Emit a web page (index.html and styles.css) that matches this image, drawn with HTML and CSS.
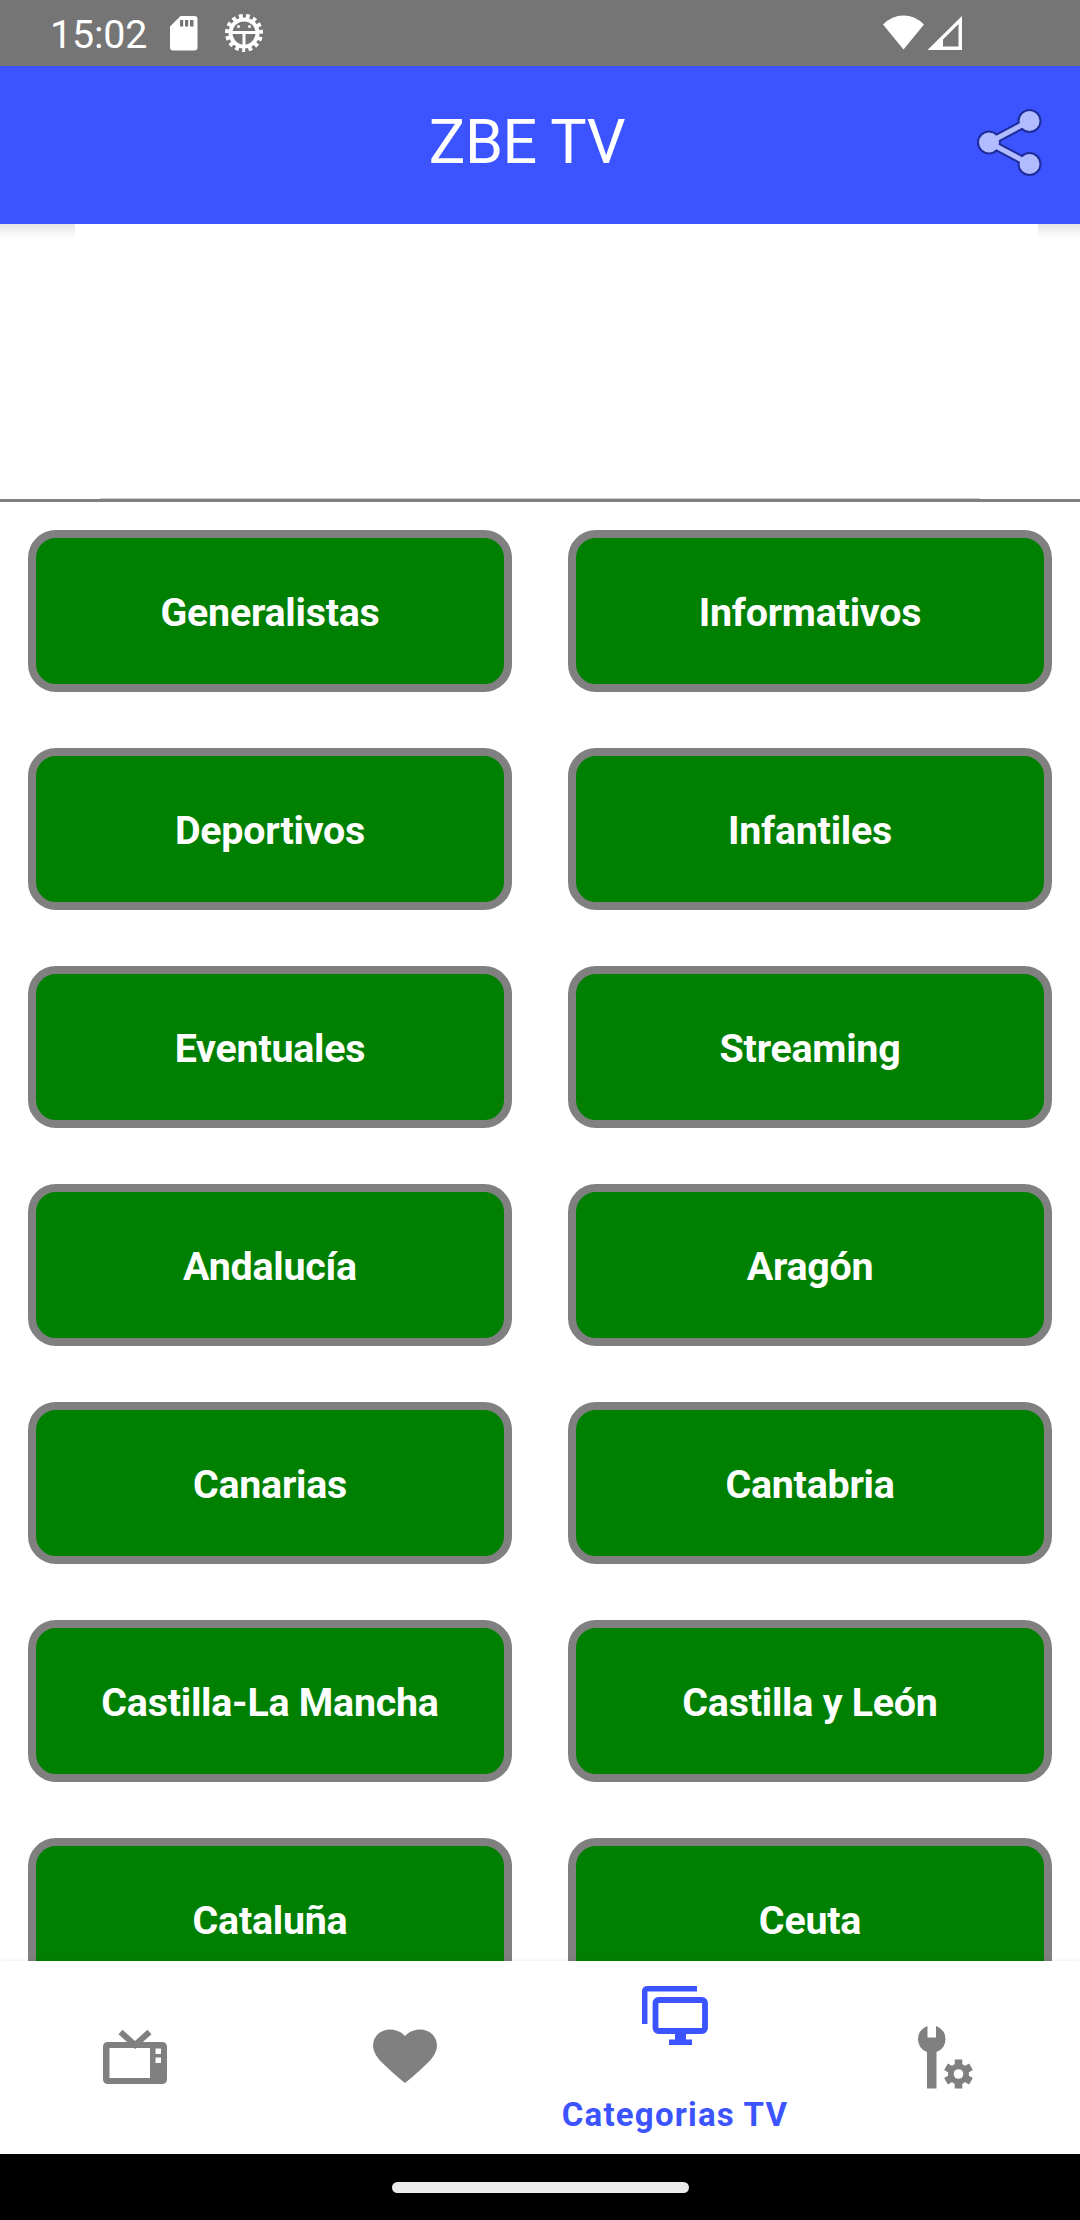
FILE: index.html
```html
<!DOCTYPE html>
<html lang="es">
<head>
    <meta charset="UTF-8">
    <meta name="viewport" content="width=device-width, initial-scale=1.0">
    <title>ZBE TV</title>
    <link rel="stylesheet" href="styles.css">
</head>
<body>
    <div class="status-bar">
        <span class="clock">15:02</span>
        <svg class="sd-icon" width="28" height="35" viewBox="0 0 28 35">
            <path fill="#fff" fill-rule="evenodd" d="M10.500 0H24.500Q27.500 0 27.500 3V31.500Q27.500 34.500 24.500 34.500H3Q0 34.500 0 31.500V10.500ZM10 4V10.500H13.200V4ZM15 4V10.500H18.200V4ZM20 4V10.500H23.500V4Z"/>
        </svg>
        <svg class="bug-icon" width="40" height="40" viewBox="-20 -20 40 40">
            <circle r="13.500" fill="none" stroke="#fff" stroke-width="4"/>
            <circle r="16.500" fill="none" stroke="#fff" stroke-width="5" stroke-dasharray="3.700 3.212" stroke-dashoffset="1.850" transform="rotate(90)"/>
            <path d="M-13-.5H13M0 0V14" stroke="#fff" stroke-width="3"/>
            <circle cx="-5.500" cy="-6.500" r="1.500" fill="#fff"/>
            <circle cx="5.500" cy="-6.500" r="1.500" fill="#fff"/>
        </svg>
        <svg class="signal-icons" width="80" height="36" viewBox="0 0 80 36">
            <path fill="#fff" d="M0 9.500Q9 .5 20.500 .5T41 9.500L20.500 34.500Z"/>
            <path fill="#fff" fill-rule="evenodd" d="M44.500 35L79 1V35ZM60 31.500H75.500V9L60 24.500Z"/>
        </svg>
    </div>

    <header class="app-header">
        <h1 class="title">ZBE TV</h1>
        <svg class="share-icon" width="68" height="70" viewBox="975 107 68 70">
            <g class="share-outline">
                <path d="M1029.500 121L989 142.500L1029.500 164"/>
                <circle cx="989" cy="142.500" r="12"/>
                <circle cx="1029.500" cy="121" r="12"/>
                <circle cx="1029.500" cy="164" r="12"/>
            </g>
            <g class="share-fill">
                <path d="M1029.500 121L989 142.500L1029.500 164"/>
                <circle cx="989" cy="142.500" r="10"/>
                <circle cx="1029.500" cy="121" r="10"/>
                <circle cx="1029.500" cy="164" r="10"/>
            </g>
        </svg>
    </header>

    <div class="banner">
        <div class="shadows">
            <div class="shadow shadow-left"></div>
            <div class="shadow shadow-right"></div>
        </div>
        <div class="banner-edge"></div>
    </div>

    <main class="categories">
        <div class="category">Generalistas</div>
        <div class="category">Informativos</div>
        <div class="category">Deportivos</div>
        <div class="category">Infantiles</div>
        <div class="category">Eventuales</div>
        <div class="category">Streaming</div>
        <div class="category">Andalucía</div>
        <div class="category">Aragón</div>
        <div class="category">Canarias</div>
        <div class="category">Cantabria</div>
        <div class="category">Castilla-La Mancha</div>
        <div class="category">Castilla y León</div>
        <div class="category">Cataluña</div>
        <div class="category">Ceuta</div>
    </main>

    <nav class="bottom-nav">
        <div class="nav-item">
            <svg width="66" height="66" viewBox="0 0 66 66">
                <path d="M18.500 7L33 20L47.500 7" fill="none" stroke="#808080" stroke-width="6"/>
                <path fill="#808080" fill-rule="evenodd" d="M6 17H60Q65 17 65 22V54Q65 59 60 59H6Q1 59 1 54V22Q1 17 6 17ZM7.500 23V53H48V23ZM53.500 23.500V29H59V23.500ZM53.500 32.500V38H59V32.500Z"/>
            </svg>
        </div>
        <div class="nav-item">
            <svg width="66" height="66" viewBox="0 0 66 66">
                <path fill="#808080" d="M33 58Q24 51 12 39.500Q1 29.500 1 21Q1 13.500 6 9Q11 4.500 18 4.500Q27 4.500 33 11Q39 4.500 48 4.500Q55 4.500 60 9Q65 13.500 65 21Q65 29.500 54 39.500Q42 51 33 58Z"/>
            </svg>
        </div>
        <div class="nav-item active">
            <svg width="66" height="66" viewBox="0 0 66 66">
                <path d="M2.700 41V8.700Q2.700 5.700 5.700 5.700H55" fill="none" stroke="#3c54ff" stroke-width="5.500"/>
                <rect x="13.500" y="17" width="49.500" height="31" rx="3" fill="none" stroke="#3c54ff" stroke-width="5.800"/>
                <path fill="#3c54ff" d="M33 49H44V56.500H50V62H27V56.500H33Z"/>
            </svg>
            <span class="nav-label">Categorias TV</span>
        </div>
        <div class="nav-item">
            <svg width="66" height="66" viewBox="0 0 66 66">
                <path fill="#808080" d="M15.500 1V12.500H24V1Q33.500 5 33.500 14Q33.500 23.500 24.500 27V63.500H15V27Q6 23.500 6 14Q6 5 15.500 1Z"/>
                <g transform="translate(46.500 49)">
                    <path d="M0-14.500V14.500M-12.500-7.200L12.500 7.200M-12.500 7.200L12.500-7.200" stroke="#808080" stroke-width="7.500"/>
                    <circle r="10.500" fill="#808080"/>
                    <circle r="4.800" fill="#fff"/>
                </g>
            </svg>
        </div>
    </nav>

    <div class="gesture-bar">
        <div class="gesture-pill"></div>
    </div>
</body>
</html>
```
FILE: styles.css
```css
* {
    box-sizing: border-box;
}
body {
    display: flex;
    flex-direction: column;
    height: 2220px;
    margin: 0;
    overflow: hidden;
    background-color: #fff;
    font-family: Roboto, sans-serif;
}
svg {
    display: block;
    flex-shrink: 0;
}
.status-bar {
    display: flex;
    align-items: flex-start;
    flex-shrink: 0;
    height: 66px;
    padding-left: 50px;
    background-color: #757575;
    color: #fff;
}
.clock {
    width: 120px;
    padding-top: 12px;
    font-size: 39.4px;
    line-height: 46px;
    letter-spacing: -0.2px;
}
.sd-icon {
    margin-top: 16px;
}
.bug-icon {
    margin: 13px 0 0 26px;
}
.signal-icons {
    margin: 15px 117px 0 auto;
}
.app-header {
    display: flex;
    align-items: center;
    flex-shrink: 0;
    height: 158px;
    padding: 0 37px 0 79px;
    background-color: #3c54ff;
}
.title {
    flex: 1;
    margin: -6px 0 0;
    color: #fff;
    font-size: 61px;
    font-weight: 400;
    line-height: 72px;
    letter-spacing: -0.4px;
    text-align: center;
}
.share-icon {
    margin-top: -6px;
}
.share-outline path,
.share-fill path {
    fill: none;
}
.share-outline {
    fill: #1d2c99;
    stroke: #1d2c99;
    stroke-width: 9;
}
.share-fill {
    fill: #b1bbff;
    stroke: #b1bbff;
    stroke-width: 5;
}
.share-outline circle,
.share-fill circle {
    stroke: none;
}
.banner {
    display: flex;
    flex-direction: column;
    justify-content: space-between;
    flex-shrink: 0;
    height: 278px;
    border-bottom: 3px solid #808080;
}
.shadows {
    display: flex;
    justify-content: space-between;
}
.shadow {
    height: 16px;
    background: linear-gradient(#e4e4e4, #f5f5f5 50%, #fff);
}
.shadow-left {
    width: 75px;
}
.shadow-right {
    width: 42px;
}
.banner-edge {
    width: 880px;
    height: 1px;
    margin: 0 auto;
    background-color: #ccc;
}
.categories {
    display: grid;
    grid-template-columns: 1fr 1fr;
    grid-auto-rows: 162px;
    gap: 56px;
    flex: 1;
    min-height: 0;
    padding: 28px 28px 0;
    overflow: hidden;
}
.category {
    display: flex;
    justify-content: center;
    align-items: center;
    padding-top: 2px;
    border: 8px solid #808080;
    border-radius: 28px;
    background-color: #008000;
    color: #fff;
    font-size: 39.4px;
    font-weight: 700;
    letter-spacing: -0.25px;
}
.bottom-nav {
    display: grid;
    grid-template-columns: repeat(4, 1fr);
    flex-shrink: 0;
    height: 193px;
    background-color: #fff;
    box-shadow: 0 0 6px rgba(0, 0, 0, 0.08);
}
.nav-item {
    display: flex;
    flex-direction: column;
    align-items: center;
    padding-top: 64px;
}
.active {
    padding-top: 22px;
}
.nav-label {
    margin-top: 46px;
    color: #3c54ff;
    font-size: 33px;
    font-weight: 700;
    line-height: 40px;
    letter-spacing: 1.2px;
    white-space: nowrap;
}
.gesture-bar {
    display: flex;
    justify-content: center;
    align-items: center;
    flex-shrink: 0;
    height: 66px;
    background-color: #000;
}
.gesture-pill {
    width: 297px;
    height: 11px;
    border-radius: 6px;
    background-color: #ebebeb;
}
```
